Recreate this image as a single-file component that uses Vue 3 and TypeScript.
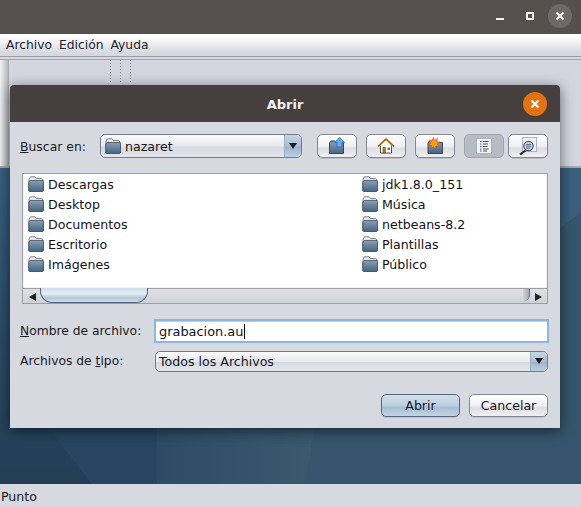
<script setup lang="ts">
const leftFolders: string[] = ['Descargas', 'Desktop', 'Documentos', 'Escritorio', 'Imágenes']
const rightFolders: string[] = ['jdk1.8.0_151', 'Música', 'netbeans-8.2', 'Plantillas', 'Público']
</script>

<template>
  <div class="app">
    <svg class="defs" width="0" height="0">
      <defs>
        <linearGradient id="fg" x1="0" y1="0" x2="0" y2="1">
          <stop offset="0" stop-color="#8aa0b6" />
          <stop offset="1" stop-color="#46637f" />
        </linearGradient>
        <linearGradient id="wallMid" x1="0" y1="0" x2="1" y2="0">
          <stop offset="0" stop-color="#2c4c64" />
          <stop offset="1" stop-color="#3a5a70" />
        </linearGradient>
        <linearGradient id="wallLeft" x1="0" y1="0" x2="0" y2="1">
          <stop offset="0" stop-color="#38607f" />
          <stop offset=".55" stop-color="#2a4a64" />
          <stop offset="1" stop-color="#223e55" />
        </linearGradient>
        <symbol id="folder" viewBox="0 0 16 16">
          <path d="M1 15V3L2.5 .8H7L8.5 2.5H13.5L15 4V15Z" fill="#f0f2f5" stroke="#6a7682" stroke-width=".9" />
          <path d="M.8 6L2.2 4.4H15L15.6 5.4V14.6L14.6 15.6H1.8L.8 14.6Z" fill="url(#fg)" stroke="#39434e" stroke-width=".8" />
        </symbol>
      </defs>
    </svg>

    <header class="wm-bar">
      <span class="wm-min"></span>
      <span class="wm-max"></span>
      <span class="wm-close">
        <svg width="10" height="10" viewBox="0 0 10 10"><path d="M1.5 1.5L8.5 8.5M8.5 1.5L1.5 8.5" stroke="#eeeeee" stroke-width="2.2" /></svg>
      </span>
    </header>

    <nav class="menu">
      <span>Archivo</span><span>Edición</span><span>Ayuda</span>
    </nav>

    <main class="workspace">
      <div class="toolbar">
        <div class="side"></div>
        <div class="tools">
          <i class="grip"></i><i class="grip"></i><i class="grip"></i>
        </div>
      </div>
      <svg class="wall" viewBox="0 0 581 317" preserveAspectRatio="none">
        <rect width="581" height="317" fill="#35556c" />
        <path d="M0 0H157V317H0Z" fill="url(#wallLeft)" />
        <path d="M50 263L92 317H157V200Z" fill="#274560" />
        <path d="M157 0H325Q320 280 303 317H157Z" fill="url(#wallMid)" />
        <path d="M560 60L581 45V0H560Z" fill="#3a5e7c" />
      </svg>
    </main>

    <footer class="status">Punto</footer>

    <section class="dialog">
      <div class="dlg-title">
        <span>Abrir</span>
        <span class="dlg-close">
          <svg width="10" height="10" viewBox="0 0 10 10"><path d="M1.5 1.5L8.5 8.5M8.5 1.5L1.5 8.5" stroke="#fff" stroke-width="2.2" /></svg>
        </span>
      </div>

      <div class="dlg-body">
        <div class="look-row">
          <label class="look-label"><u>B</u>uscar en:</label>
          <div class="combo look-combo">
            <svg class="ic" width="16" height="16"><use href="#folder" /></svg>
            <span class="combo-text">nazaret</span>
            <span class="combo-arrow"></span>
          </div>
          <div class="tool-btns">
            <button class="tbtn">
              <svg width="18" height="18" viewBox="0 0 18 18">
                <path d="M1.5 16.5V6L3 4H7L8 5.5H15.5V16.5Z" fill="url(#fg)" stroke="#3c4753" />
                <path d="M11.5 .5L16.5 5.5H14V10H9V5.5H6.5Z" fill="#5db0ee" stroke="#2a6fb0" stroke-width=".8" />
              </svg>
            </button>
            <button class="tbtn">
              <svg width="18" height="18" viewBox="0 0 18 18">
                <path d="M3.5 8.5V16H14.5V8.5" fill="#fff" stroke="#5b5036" />
                <path d="M1 9.5L9 2L17 9.5" fill="none" stroke="#b58a2a" stroke-width="1.8" />
                <path d="M1 9.5L9 2L17 9.5" fill="none" stroke="#4d3d14" stroke-width=".5" />
                <rect x="6" y="10.5" width="2.5" height="5.5" fill="#a87a30" stroke="#54401a" stroke-width=".5" />
                <rect x="10.5" y="10.5" width="2.5" height="2.5" fill="#4e7ba6" />
              </svg>
            </button>
            <button class="tbtn">
              <svg width="18" height="18" viewBox="0 0 18 18">
                <path d="M2 16.5V6L3.5 4H8L9 5.5H16.5V16.5Z" fill="url(#fg)" stroke="#3c4753" />
                <path d="M7.5 0.5L8.7 3.5L11.5 1.5L10.6 4.7L14 5L11 7L13.2 9.5L10 9L9.5 12L7.5 9.7L5 11.5L5.5 8.5L2.5 8L5 6L3 3L6 4Z" fill="#f6a013" stroke="#e0401a" stroke-width=".6" />
              </svg>
            </button>
            <button class="tbtn active">
              <svg width="16" height="16" viewBox="0 0 16 16">
                <rect x=".5" y=".5" width="15" height="15" fill="#f2f4f7" stroke="#a9b3bf" />
                <path d="M4 3.5H5.5M7 3.5H12.5M4 6H5.5M7 6H12M4 8.5H5.5M7 8.5H11.5M4 11H5.5M7 11H12.5M4 13H5.5M7 13H11" stroke="#47525f" stroke-width="1.1" />
              </svg>
            </button>
            <button class="tbtn">
              <svg width="18" height="18" viewBox="0 0 18 18">
                <rect x="3.5" y=".5" width="14" height="14" fill="#eef0f3" stroke="#a9b3bf" />
                <path d="M6.5 13.5L1 17.5" stroke="#222" stroke-width="2" />
                <circle cx="9.5" cy="9" r="4.7" fill="#c3d2e2" stroke="#4f5b68" stroke-width="1.2" />
                <path d="M7 7.5H12M7 9.2H12M7 11H11" stroke="#4f5b68" stroke-width=".8" />
              </svg>
            </button>
          </div>
        </div>

        <div class="files">
          <div class="file-list">
            <ul class="col">
              <li v-for="f in leftFolders" :key="f">
                <svg class="ic" width="16" height="16"><use href="#folder" /></svg>{{ f }}
              </li>
            </ul>
            <ul class="col col-right">
              <li v-for="f in rightFolders" :key="f">
                <svg class="ic" width="16" height="16"><use href="#folder" /></svg>{{ f }}
              </li>
            </ul>
          </div>
          <div class="hscroll">
            <span class="arr arr-left"></span>
            <span class="thumb"></span>
            <span class="bump"></span>
            <span class="arr arr-right"></span>
          </div>
        </div>

        <div class="field-row name-row">
          <label class="field-label"><u>N</u>ombre de archivo:</label>
          <div class="name-input">grabacion.au<span class="caret"></span></div>
        </div>

        <div class="field-row type-row">
          <label class="field-label">Archivos de <u>t</u>ipo:</label>
          <div class="combo type-combo">
            <span class="combo-text">Todos los Archivos</span>
            <span class="combo-arrow"></span>
          </div>
        </div>

        <div class="actions">
          <button class="act primary">Abrir</button>
          <button class="act">Cancelar</button>
        </div>
      </div>
    </section>
  </div>
</template>

<style>
html, body { margin: 0; overflow: hidden; }
</style>

<style scoped>
.app {
  position: relative;
  width: 581px;
  height: 507px;
  display: flex;
  flex-direction: column;
  overflow: hidden;
  font: 12.6px "DejaVu Sans", sans-serif;
  color: #1a1a22;
}
.defs { position: absolute; }
.wm-bar {
  height: 34px;
  flex: none;
  background: #54504c;
  position: relative;
}
.wm-min { position: absolute; left: 496px; top: 18px; width: 8px; height: 2px; background: #f2f2f2; }
.wm-max { position: absolute; left: 526px; top: 12px; width: 4px; height: 4px; border: 2px solid #f2f2f2; box-sizing: content-box; }
.wm-close {
  position: absolute; left: 548px; top: 4px; width: 24px; height: 24px; border-radius: 50%;
  background: #6c6865; display: flex; align-items: center; justify-content: center;
}
.menu {
  height: 22px;
  flex: none;
  display: flex;
  align-items: center;
  gap: 7px;
  padding-left: 6px;
  font-size: 12.3px;
  background: linear-gradient(#ffffff 10%, #d6d9e0 85%);
  border-bottom: 1px solid #9a9da4;
  color: #22222c;
}
.workspace { flex: 1; display: flex; flex-direction: column; min-height: 0; }
.toolbar {
  height: 107px;
  flex: none;
  display: flex;
  border-top: 2px solid #d6d9e0;
  border-bottom: 2px solid #a4a7ad;
  box-shadow: inset 0 1px 0 #a0a3aa;
  background: #d3d6df;
}
.side {
  width: 8px;
  background: linear-gradient(90deg, #f2f3f5, #b6b8bd);
  border-right: 1px solid #a8abb1;
  margin-top: 1px;
}
.tools { flex: 1; display: flex; gap: 9px; padding-left: 101px; }
.grip { width: 1px; height: 24px; margin-top: 1px; background: repeating-linear-gradient(#8a8d94 0 1px, transparent 1px 3px); }
.wall { flex: 1; min-height: 0; width: 100%; display: block; }
.status {
  height: 23px;
  flex: none;
  background: #d6d9e0;
  padding-left: 1px;
  line-height: 25px;
  box-sizing: border-box;
}

.dialog {
  position: absolute;
  left: 10px;
  top: 85px;
  width: 550px;
  height: 343px;
  display: flex;
  flex-direction: column;
  background: #d6d9e0;
  border-radius: 4px 4px 0 0;
  box-shadow: 0 3px 14px rgba(0, 0, 0, .55);
}
.dlg-title {
  height: 37px;
  flex: none;
  position: relative;
  display: flex;
  align-items: center;
  justify-content: center;
  box-sizing: border-box;
  padding-top: 1px;
  background: #45403d;
  border-radius: 4px 4px 0 0;
  color: #f4f4f4;
  font-weight: 700;
  font-size: 13px;
}
.dlg-close {
  position: absolute; left: 513px; top: 7px; width: 24px; height: 24px; border-radius: 50%;
  background: #e8710f; display: flex; align-items: center; justify-content: center;
}
.dlg-body { flex: 1; display: flex; flex-direction: column; padding: 12px 11px 0 10px; min-height: 0; }

.look-row { display: flex; align-items: center; height: 24px; }
.look-label { width: 80px; flex: none; font-size: 12.4px; }
.combo {
  display: flex;
  align-items: center;
  box-sizing: border-box;
  border: 1px solid #737c89;
  border-radius: 5px;
  background: linear-gradient(#fbfbfc, #e6e8ed 50%, #d6d9e0 55%, #e4e6eb);
  overflow: hidden;
}
.look-combo { width: 202px; height: 24px; padding-left: 4px; gap: 4px; }
.combo-text { flex: 1; color: #16161e; }
.combo-arrow {
  position: relative;
  width: 16px;
  align-self: stretch;
  flex: none;
  background: linear-gradient(#c6d5e3, #a9bfd4 50%, #9db5cc 55%, #bccfe0);
  border-left: 1px solid #9fb0c0;
}
.combo-arrow::after {
  content: "";
  position: absolute;
  left: 4px;
  top: calc(50% - 3px);
  border-left: 4px solid transparent;
  border-right: 4px solid transparent;
  border-top: 6px solid #1d1d1d;
}
.tool-btns { display: flex; margin-left: 15px; gap: 9px; }
.tbtn {
  width: 40px;
  height: 24px;
  padding: 0;
  box-sizing: border-box;
  display: flex;
  align-items: center;
  justify-content: center;
  border: 1px solid #83878f;
  border-radius: 5px;
  background: linear-gradient(#ffffff, #f0f1f4 50%, #dcdee4 60%, #eef0f3);
  box-shadow: 0 1px 0 #bfc2c9;
}
.tbtn.active {
  background: #b7bbc4;
  border: 1px solid #a2a6ae;
  box-shadow: none;
}
.tbtn:last-child { margin-left: -5px; }

.files {
  margin: 15px 1px 0 2px;
  height: 131px;
  flex: none;
  border: 1px solid #9da0a7;
  box-sizing: border-box;
  display: flex;
  flex-direction: column;
  background: #fff;
}
.file-list { height: 115px; flex: none; display: flex; box-shadow: inset 0 -1px 1px 0 rgba(60, 60, 70, .55); }
.col { list-style: none; margin: 0; padding: 0 0 0 5px; width: 334px; flex: none; box-sizing: border-box; }
.col-right { width: auto; padding-left: 5px; }
.col li { display: flex; align-items: center; height: 20px; gap: 4px; color: #12121c; }
.ic { flex: none; }
.hscroll {
  flex: 1;
  position: relative;
  background: linear-gradient(#dfe1e6, #cfd2d9);
}
.arr { position: absolute; top: 4px; border-top: 4px solid transparent; border-bottom: 4px solid transparent; }
.arr-left { left: 6px; border-right: 7px solid #222; }
.arr-right { right: 5px; border-left: 7px solid #222; }
.thumb {
  position: absolute;
  left: 17px;
  top: -1px;
  width: 108px;
  height: 15px;
  box-sizing: border-box;
  border: 1px solid #4f6478;
  border-top: 0;
  border-radius: 0 0 12px 12px;
  background: linear-gradient(#cfdeec, #e4edf5 40%, #b4c8da 70%, #cfdde9);
}
.bump {
  position: absolute;
  right: 17px;
  top: 0;
  width: 6px;
  height: 12px;
  border-radius: 0 0 6px 0;
  border-right: 1px solid #6b7078;
  background: linear-gradient(90deg, #cfd2d9, #a8abb2);
}

.field-row { display: flex; align-items: center; }
.field-label { width: 134px; flex: none; font-size: 12.3px; }
.name-row { margin-top: 15px; height: 24px; }
.name-input {
  width: 395px;
  height: 24px;
  box-sizing: border-box;
  border: 2px solid #8db6de;
  background: #fff;
  padding-left: 3px;
  display: flex;
  align-items: center;
  color: #12121c;
  font-size: 12.9px;
  box-shadow: inset 0 1px 0 #c9cdd3;
}
.caret { width: 1px; height: 15px; background: #111; margin-left: 1px; }
.type-row { margin-top: 7px; height: 22px; }
.type-combo { margin-left: 1px; width: 393px; height: 21px; padding-left: 3px; }
.actions { display: flex; justify-content: flex-end; gap: 9px; margin-top: 22px; padding-right: 1px; }
.act {
  width: 79px;
  height: 23px;
  padding: 0;
  font: inherit;
  color: #16161e;
  border: 1px solid #83878f;
  border-radius: 5px;
  background: linear-gradient(#ffffff, #f0f1f4 50%, #dcdee4 60%, #eef0f3);
  box-shadow: 0 1px 0 #bfc2c9;
}
.act.primary {
  border-color: #56687c;
  background: linear-gradient(#d4e0ea, #bccfe0 50%, #a6bed3 60%, #c3d5e4);
}
</style>
